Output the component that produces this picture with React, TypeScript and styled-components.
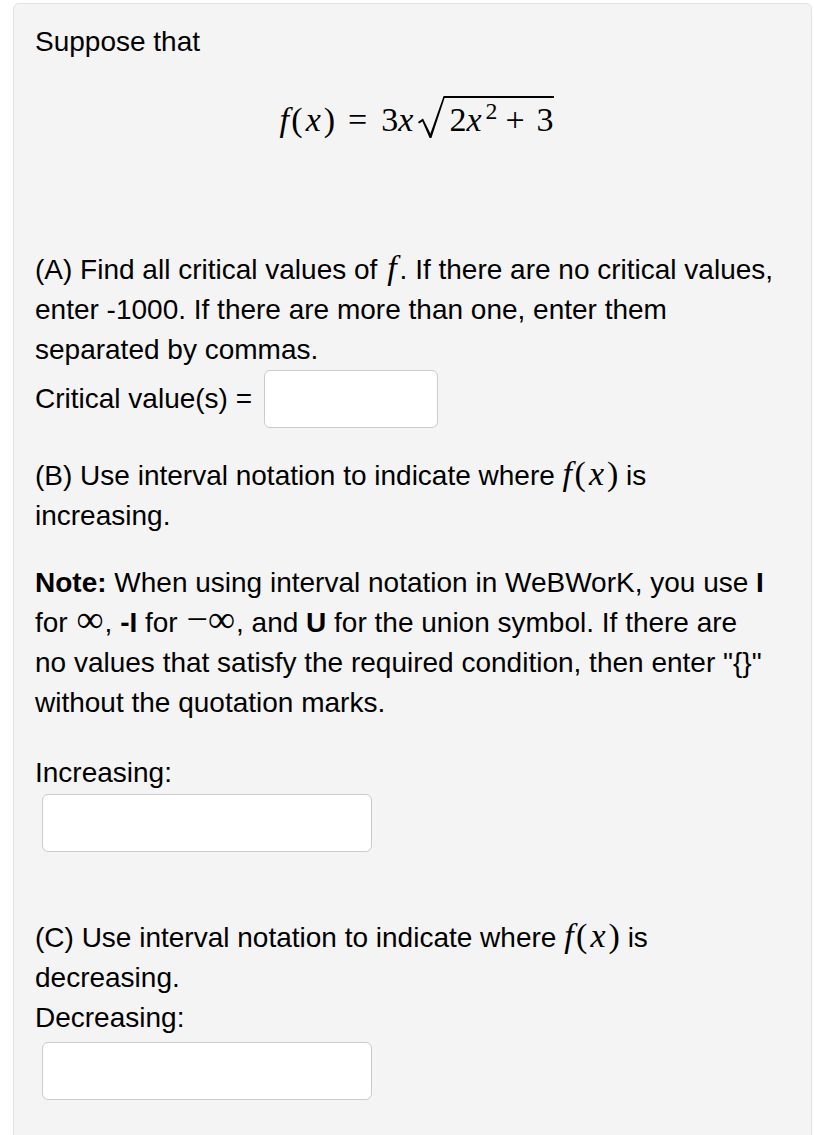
import React from "react";
import styled, { createGlobalStyle } from "styled-components";

const GlobalStyle = createGlobalStyle`
  html, body {
    margin: 0;
    padding: 0;
    background: #ffffff;
    overflow: hidden;
  }
  body {
    font-family: "Liberation Sans", Arial, Helvetica, sans-serif;
    color: #000000;
  }
`;

const Well = styled.div`
  margin: 3px 2px 0 13px;
  padding: 18px 21px 60px 21px;
  min-height: 1200px;
  background: #f4f4f4;
  border: 1px solid #e3e3e3;
  border-radius: 6px;
  font-size: 28px;
  line-height: 40px;
`;

const Para = styled.p<{ $mt?: number }>`
  margin: ${(p) => p.$mt ?? 0}px 0 0;
`;

const DisplayMath = styled.div`
  margin-top: 30px;
  padding-left: 8px;
  text-align: center;
  line-height: 60px;
`;

const MathText = styled.span`
  font-family: "Liberation Serif", "DejaVu Serif", "Times New Roman", serif;
  font-size: 34px;
  line-height: 1;
  white-space: nowrap;
`;

const Var = styled.span<{ $r?: number; $l?: number }>`
  font-style: italic;
  margin-left: ${(p) => p.$l ?? 0}px;
  margin-right: ${(p) => p.$r ?? 0}px;
`;

const Sym = styled.span<{ $r?: number; $l?: number }>`
  margin-left: ${(p) => p.$l ?? 0}px;
  margin-right: ${(p) => p.$r ?? 0}px;
`;

const Infinity = styled.span`
  font-family: "Liberation Serif", "DejaVu Serif", serif;
  font-size: 38px;
  line-height: 0;
  margin: 0 1px;
`;

const Sup = styled.span`
  font-size: 0.7em;
  vertical-align: 0.5em;
  line-height: 0;
`;

const RadicalSign = styled.svg`
  display: inline-block;
  width: 28px;
  height: 43px;
  vertical-align: -8px;
`;

const Radicand = styled.span`
  display: inline-block;
  border-top: 2px solid #000;
  padding: 5px 0 0 4px;
  line-height: 34px;
`;

const Bold = styled.b`
  font-weight: 700;
`;

const AnswerRow = styled.div`
  display: flex;
  align-items: center;
  gap: 12px;
  height: 58px;
`;

const AnswerBox = styled.input<{ $w: number; $mt?: number; $ml?: number }>`
  box-sizing: border-box;
  display: block;
  width: ${(p) => p.$w}px;
  height: 58px;
  margin: ${(p) => p.$mt ?? 0}px 0 0 ${(p) => p.$ml ?? 0}px;
  padding: 0 10px;
  background: #ffffff;
  border: 1.5px solid #cccccc;
  border-radius: 6px;
  font-size: 26px;
  outline: none;
`;

const Sqrt: React.FC<{ children: React.ReactNode }> = ({ children }) => (
  <>
    <RadicalSign viewBox="0 0 28 43" aria-hidden="true">
      <polygon
        points="1,26 6,22.5 13.4,37.5 26.6,0 28,0 28,2 27.6,2 14.4,42 12.6,42 5.4,25.5 2,27.5"
        fill="#000"
      />
    </RadicalSign>
    <Radicand>{children}</Radicand>
  </>
);

const Fx = () => (
  <MathText>
    <Var $r={2.5}>f</Var>
    <Sym $r={2}>(</Sym>
    <Var $l={1} $r={3}>x</Var>)
  </MathText>
);

export default function App() {
  return (
    <>
      <GlobalStyle />
      <Well>
        <Para>Suppose that</Para>
        <DisplayMath>
          <MathText>
            <Var $r={2.5}>f</Var>
            <Sym $r={2}>(</Sym>
            <Var $l={1} $r={3}>x</Var>)
            <Sym $l={13} $r={14}>=</Sym>3<Var $r={4}>x</Var>
            <Sqrt>
              2<Var $r={4}>x</Var>
              <Sup>2</Sup>
              <Sym $l={8} $r={12}>+</Sym>3
            </Sqrt>
          </MathText>
        </DisplayMath>

        <Para $mt={98}>
          (A) Find all critical values of{" "}
          <MathText>
            <Var $l={2} $r={3}>f</Var>
          </MathText>
          . If there are no critical values, enter -1000. If there are more
          than one, enter them separated by commas.
        </Para>
        <AnswerRow>
          <span>Critical value(s) =</span>
          <AnswerBox $w={174} aria-label="Critical values" />
        </AnswerRow>

        <Para $mt={28}>
          (B) Use interval notation to indicate where <Fx /> is
          <br />
          increasing.
        </Para>

        <Para $mt={27}>
          <Bold>Note:</Bold> When using interval notation in WeBWorK, you use{" "}
          <Bold>I</Bold>
          <br />
          for <Infinity>∞</Infinity>, <Bold>-I</Bold> for{" "}
          <Infinity>−∞</Infinity>, and <Bold>U</Bold> for the union symbol. If
          there are
          <br />
          no values that satisfy the required condition, then enter "{"{}"}"
          <br />
          without the quotation marks.
        </Para>

        <Para $mt={30}>Increasing:</Para>
        <AnswerBox $w={330} $mt={1} $ml={7} aria-label="Increasing" />

        <Para $mt={66}>
          (C) Use interval notation to indicate where <Fx /> is
          <br />
          decreasing.
        </Para>
        <Para>Decreasing:</Para>
        <AnswerBox $w={330} $mt={4} $ml={7} aria-label="Decreasing" />
      </Well>
    </>
  );
}
